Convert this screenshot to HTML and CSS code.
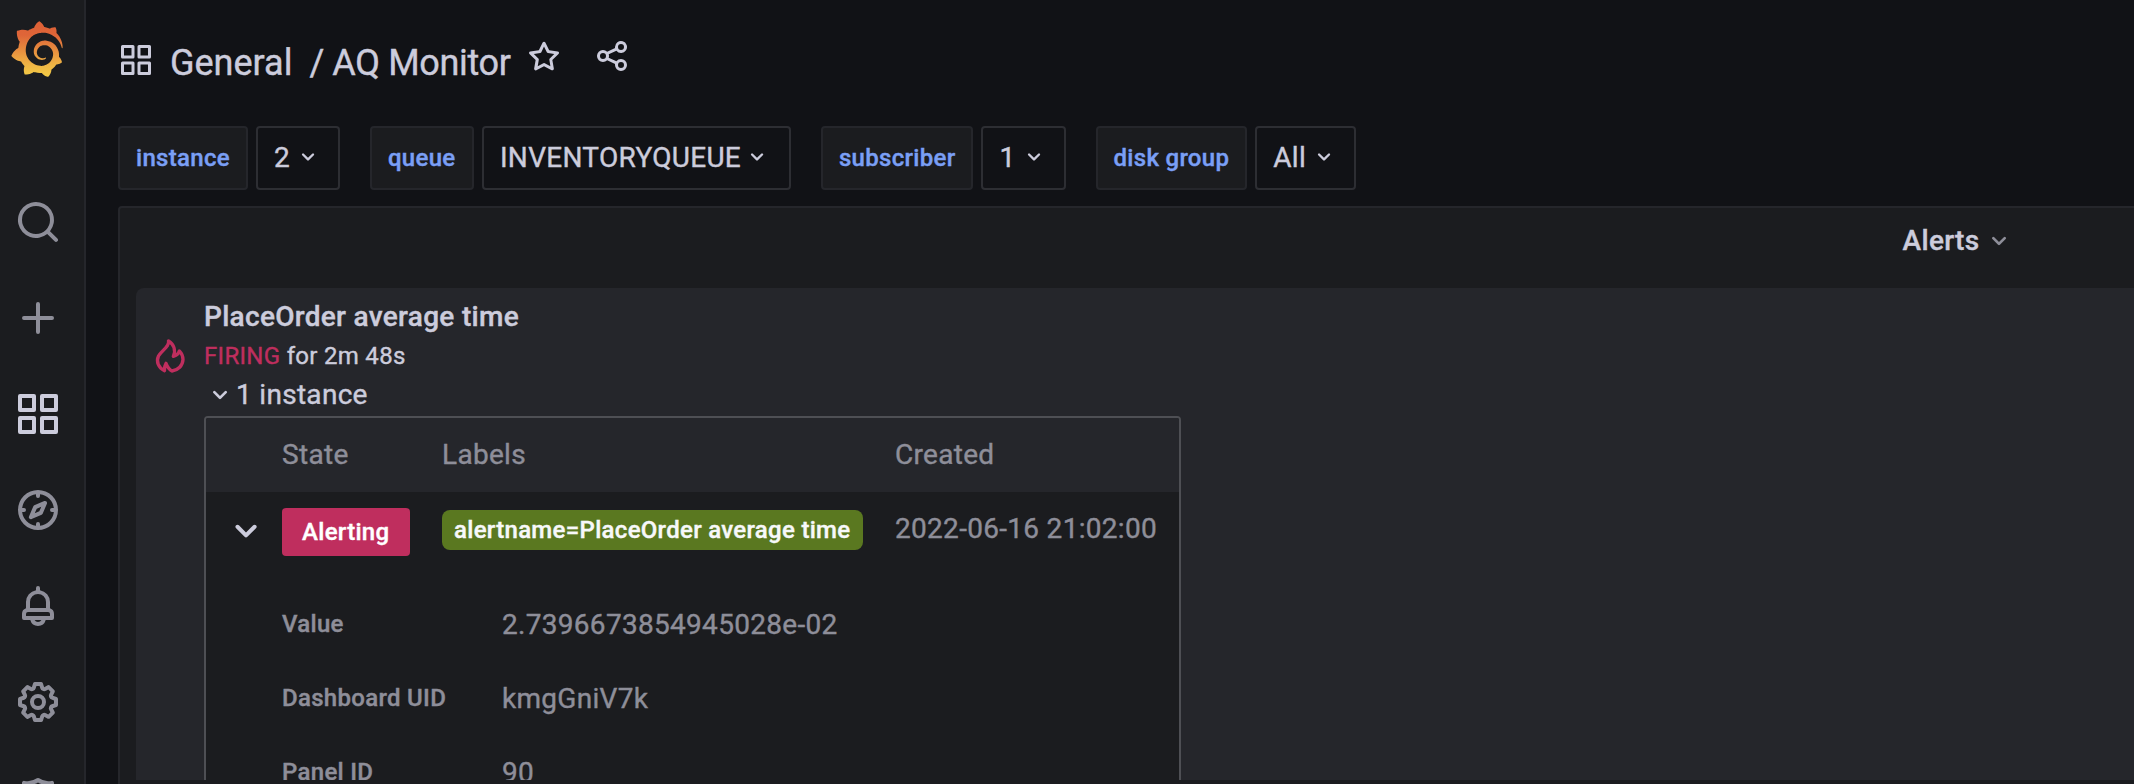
FILE: index.html
```html
<!DOCTYPE html>
<html lang="en">
<head>
<meta charset="utf-8">
<title>AQ Monitor</title>
<link rel="stylesheet" href="styles.css">
</head>
<body>
<svg class="defs" aria-hidden="true">
  <symbol id="apps" viewBox="0 0 24 24"><path d="M10,13H3a1,1,0,0,0-1,1v7a1,1,0,0,0,1,1h7a1,1,0,0,0,1-1V14A1,1,0,0,0,10,13ZM9,20H4V15H9ZM21,2H14a1,1,0,0,0-1,1v7a1,1,0,0,0,1,1h7a1,1,0,0,0,1-1V3A1,1,0,0,0,21,2ZM20,9H15V4h5Zm1,4H14a1,1,0,0,0-1,1v7a1,1,0,0,0,1,1h7a1,1,0,0,0,1-1V14A1,1,0,0,0,21,13Zm-1,7H15V15h5ZM10,2H3A1,1,0,0,0,2,3v7a1,1,0,0,0,1,1h7a1,1,0,0,0,1-1V3A1,1,0,0,0,10,2ZM9,9H4V4H9Z"/></symbol>
  <symbol id="angle" viewBox="0 0 24 24"><path d="M17,9.17a1,1,0,0,0-1.41,0L12,12.71,8.46,9.17a1,1,0,0,0-1.41,0,1,1,0,0,0,0,1.42l4.24,4.24a1,1,0,0,0,1.42,0L17,10.59A1,1,0,0,0,17,9.17Z"/></symbol>
</svg>
<div class="app">
  <nav class="sidebar">
    <svg class="logo" viewBox="0 0 351 365"><defs><linearGradient id="lg" gradientUnits="userSpaceOnUse" x1="175" y1="365" x2="175" y2="1"><stop offset="0" stop-color="#f3cc45"/><stop offset=".2" stop-color="#efb745"/><stop offset=".75" stop-color="#df6538"/><stop offset="1" stop-color="#dd6036"/></linearGradient></defs><path fill="url(#lg)" d="M342,161.2c-0.6-6.1-1.6-13.1-3.6-20.9c-2-7.7-5-16.2-9.4-25c-4.4-8.8-10.1-17.9-17.5-26.8c-2.9-3.5-6.1-6.9-9.5-10.2c5.1-20.3-6.2-37.9-6.2-37.9c-19.5-1.2-31.9,6.1-36.5,9.4c-0.8-0.3-1.5-0.7-2.3-1c-3.3-1.3-6.7-2.6-10.3-3.7c-3.5-1.1-7.1-2.1-10.8-3c-3.7-0.9-7.4-1.6-11.2-2.2c-0.7-0.1-1.3-0.2-2-0.3c-8.5-27.2-32.9-38.6-32.9-38.6c-27.3,17.3-32.4,41.5-32.4,41.5s-0.1,0.5-0.3,1.4c-1.5,0.4-3,0.9-4.5,1.3c-2.1,0.6-4.2,1.4-6.2,2.2c-2.1,0.8-4.1,1.6-6.2,2.5c-4.1,1.8-8.2,3.8-12.2,6c-3.9,2.2-7.7,4.6-11.4,7.1c-0.5-0.2-1-0.4-1-0.4c-37.8-14.4-71.3,2.9-71.3,2.9c-3.1,40.2,15.1,65.5,18.7,70.1c-0.9,2.5-1.7,5-2.5,7.5c-2.8,9.1-4.9,18.4-6.2,28.1c-0.2,1.4-0.4,2.8-0.5,4.2C18.8,192.7,8.5,228,8.5,228c29.1,33.5,63.1,35.6,63.1,35.6c0,0,0.1-0.1,0.1-0.1c4.3,7.7,9.3,15,14.9,21.9c2.4,2.9,4.8,5.6,7.4,8.3c-10.6,30.4,1.5,55.6,1.5,55.6c32.4,1.2,53.7-14.2,58.2-17.7c3.2,1.1,6.5,2.1,9.8,2.9c10,2.6,20.2,4.1,30.4,4.5c2.5,0.1,5.1,0.2,7.6,0.1l1.2,0l0.8,0l1.6,0l1.6-0.1l0,0.1c15.3,21.8,42.1,24.9,42.1,24.9c19.1-20.1,20.2-40.1,20.2-44.4l0,0c0,0,0-0.1,0-0.3c0-0.4,0-0.6,0-0.6l0,0c0-0.3,0-0.6,0-0.9c4-2.8,7.8-5.8,11.4-9.1c7.6-6.9,14.3-14.8,19.9-23.3c0.5-0.8,1-1.6,1.5-2.4c21.6,1.2,36.9-13.4,36.9-13.4c-3.6-22.5-16.4-33.5-19.1-35.6l0,0c0,0-0.1-0.1-0.3-0.2c-0.2-0.1-0.2-0.2-0.2-0.2c0,0,0,0,0,0c-0.1-0.1-0.3-0.2-0.5-0.3c0.1-1.4,0.2-2.7,0.3-4.1c0.2-2.4,0.2-4.9,0.2-7.3l0-1.8l0-0.9l0-0.5c0-0.6,0-0.4,0-0.6l-0.1-1.5l-0.1-2c0-0.7-0.1-1.3-0.2-1.9c-0.1-0.6-0.1-1.3-0.2-1.9l-0.2-1.9l-0.3-1.9c-0.4-2.5-0.8-4.9-1.4-7.4c-2.3-9.7-6.1-18.9-11-27.2c-5-8.3-11.2-15.6-18.3-21.8c-7-6.2-14.9-11.2-23.1-14.9c-8.3-3.7-16.9-6.1-25.5-7.2c-4.3-0.6-8.6-0.8-12.9-0.7l-1.6,0l-0.4,0c-0.1,0-0.6,0-0.5,0l-0.7,0l-1.6,0.1c-0.6,0-1.2,0.1-1.7,0.1c-2.2,0.2-4.4,0.5-6.5,0.9c-8.6,1.6-16.7,4.7-23.8,9c-7.1,4.3-13.3,9.6-18.3,15.6c-5,6-8.9,12.7-11.6,19.6c-2.7,6.9-4.2,14.1-4.6,21c-0.1,1.7-0.1,3.5-0.1,5.2c0,0.4,0,0.9,0,1.3l0.1,1.4c0.1,0.8,0.1,1.7,0.2,2.5c0.3,3.5,1,6.9,1.9,10.1c1.9,6.5,4.9,12.4,8.6,17.4c3.7,5,8.2,9.1,12.9,12.4c4.7,3.2,9.8,5.5,14.8,7c5,1.5,10,2.1,14.7,2.1c0.6,0,1.2,0,1.7,0c0.3,0,0.6,0,0.9,0c0.3,0,0.6,0,0.9-0.1c0.5,0,1-0.1,1.5-0.1c0.1,0,0.3,0,0.4-0.1l0.5-0.1c0.3,0,0.6-0.1,0.9-0.1c0.6-0.1,1.1-0.2,1.7-0.3c0.6-0.1,1.1-0.2,1.6-0.4c1.1-0.2,2.1-0.6,3.1-0.9c2-0.7,4-1.5,5.7-2.4c1.8-0.9,3.4-2,5-3c0.4-0.3,0.9-0.6,1.3-1c1.6-1.3,1.9-3.7,0.6-5.3c-1.1-1.4-3.1-1.8-4.7-0.9c-0.4,0.2-0.8,0.4-1.2,0.6c-1.4,0.7-2.8,1.3-4.3,1.8c-1.5,0.5-3.1,0.9-4.7,1.2c-0.8,0.1-1.6,0.2-2.5,0.3c-0.4,0-0.8,0.1-1.3,0.1c-0.4,0-0.9,0-1.2,0c-0.4,0-0.8,0-1.2,0c-0.5,0-1,0-1.5-0.1c0,0-0.3,0-0.1,0l-0.2,0l-0.3,0c-0.2,0-0.5,0-0.7-0.1c-0.5-0.1-0.9-0.1-1.4-0.2c-3.7-0.5-7.4-1.6-10.9-3.2c-3.6-1.6-7-3.8-10.1-6.6c-3.1-2.8-5.8-6.1-7.9-9.9c-2.1-3.8-3.6-8-4.3-12.4c-0.3-2.2-0.5-4.5-0.4-6.7c0-0.6,0.1-1.2,0.1-1.8c0,0.2,0-0.1,0-0.1l0-0.2l0-0.5c0-0.3,0.1-0.6,0.1-0.9c0.1-1.2,0.3-2.4,0.5-3.6c1.7-9.6,6.5-19,13.9-26.1c1.9-1.8,3.9-3.4,6-4.9c2.1-1.5,4.4-2.8,6.8-3.9c2.4-1.1,4.8-2,7.4-2.7c2.5-0.7,5.1-1.1,7.8-1.4c1.3-0.1,2.6-0.2,4-0.2c0.4,0,0.6,0,0.9,0l1.1,0l0.7,0c0.3,0,0,0,0.1,0l0.3,0l1.1,0.1c2.9,0.2,5.7,0.6,8.5,1.3c5.6,1.2,11.1,3.3,16.2,6.1c10.2,5.7,18.9,14.5,24.2,25.1c2.7,5.3,4.6,11,5.5,16.9c0.2,1.5,0.4,3,0.5,4.5l0.1,1.1l0.1,1.1c0,0.4,0,0.8,0,1.1c0,0.4,0,0.8,0,1.1l0,1l0,1.1c0,0.7-0.1,1.9-0.1,2.6c-0.1,1.6-0.3,3.3-0.5,4.9c-0.2,1.6-0.5,3.2-0.8,4.8c-0.3,1.6-0.7,3.2-1.1,4.7c-0.8,3.1-1.8,6.2-3,9.3c-2.4,6-5.6,11.8-9.4,17.1c-7.7,10.6-18.2,19.2-30.2,24.7c-6,2.7-12.3,4.7-18.8,5.7c-3.2,0.6-6.5,0.9-9.8,1l-0.6,0l-0.5,0l-1.1,0l-1.6,0l-0.8,0c0.4,0-0.1,0-0.1,0l-0.3,0c-1.8,0-3.5-0.1-5.3-0.3c-7-0.5-13.9-1.8-20.7-3.7c-6.7-1.9-13.2-4.6-19.4-7.8c-12.3-6.6-23.4-15.6-32-26.5c-4.3-5.4-8.1-11.3-11.2-17.4c-3.1-6.1-5.6-12.6-7.4-19.1c-1.8-6.6-2.9-13.3-3.4-20.1l-0.1-1.3l0-0.3l0-0.3l0-0.6l0-1.1l0-0.3l0-0.4l0-0.8l0-1.6l0-0.3c0,0,0,0.1,0-0.1l0-0.6c0-0.8,0-1.7,0-2.5c0.1-3.3,0.4-6.8,0.8-10.2c0.4-3.4,1-6.9,1.7-10.3c0.7-3.4,1.5-6.8,2.5-10.2c1.9-6.7,4.3-13.2,7.1-19.3c5.7-12.2,13.1-23.1,22-31.8c2.2-2.2,4.5-4.2,6.9-6.2c2.4-1.9,4.9-3.7,7.5-5.4c2.5-1.7,5.2-3.2,7.9-4.6c1.3-0.7,2.7-1.4,4.1-2c0.7-0.3,1.4-0.6,2.1-0.9c0.7-0.3,1.4-0.6,2.1-0.9c2.8-1.2,5.7-2.2,8.7-3.1c0.7-0.2,1.5-0.4,2.2-0.7c0.7-0.2,1.5-0.4,2.2-0.6c1.5-0.4,3-0.8,4.5-1.1c0.7-0.2,1.5-0.3,2.3-0.5c0.8-0.2,1.5-0.3,2.3-0.5c0.8-0.1,1.5-0.3,2.3-0.4l1.1-0.2l1.2-0.2c0.8-0.1,1.5-0.2,2.3-0.3c0.9-0.1,1.7-0.2,2.6-0.3c0.7-0.1,1.9-0.2,2.6-0.3c0.5-0.1,1.1-0.1,1.6-0.2l1.1-0.1l0.5-0.1l0.6,0c0.9-0.1,1.7-0.1,2.6-0.2l1.3-0.1c0,0,0.5,0,0.1,0l0.3,0l0.6,0c0.7,0,1.5-0.1,2.2-0.1c2.9-0.1,5.9-0.1,8.8,0c5.8,0.2,11.5,0.9,17,1.9c11.1,2.1,21.5,5.6,31,10.3c9.5,4.6,17.9,10.3,25.3,16.5c0.5,0.4,0.9,0.8,1.4,1.2c0.4,0.4,0.9,0.8,1.3,1.2c0.9,0.8,1.7,1.6,2.6,2.4c0.9,0.8,1.7,1.6,2.5,2.4c0.8,0.8,1.6,1.6,2.4,2.5c3.1,3.3,6,6.6,8.6,10c5.2,6.7,9.4,13.5,12.7,19.9c0.2,0.4,0.4,0.8,0.6,1.2c0.2,0.4,0.4,0.8,0.6,1.2c0.4,0.8,0.8,1.6,1.1,2.4c0.4,0.8,0.7,1.5,1.1,2.3c0.3,0.8,0.7,1.5,1,2.3c1.2,3,2.4,5.9,3.3,8.6c1.5,4.4,2.6,8.3,3.5,11.7c0.3,1.4,1.6,2.3,3,2.1c1.5-0.1,2.6-1.3,2.6-2.8C342.6,170.4,342.5,166.1,342,161.2z"/></svg>
    <svg class="nav-icon" viewBox="0 0 24 24"><path d="M21.71,20.29,18,16.61A9,9,0,1,0,16.61,18l3.68,3.68a1,1,0,0,0,1.42,0A1,1,0,0,0,21.71,20.29ZM11,18a7,7,0,1,1,7-7A7,7,0,0,1,11,18Z"/></svg>
    <svg class="nav-icon" viewBox="0 0 24 24"><path d="M19,11H13V5a1,1,0,0,0-2,0v6H5a1,1,0,0,0,0,2h6v6a1,1,0,0,0,2,0V13h6a1,1,0,0,0,0-2Z"/></svg>
    <svg class="nav-icon active"><use href="#apps"/></svg>
    <svg class="nav-icon" viewBox="0 0 24 24"><path d="M12,2A10,10,0,1,0,22,12,10,10,0,0,0,12,2Zm1,17.93V19a1,1,0,0,0-2,0v.93A8,8,0,0,1,4.07,13H5a1,1,0,0,0,0-2H4.07A8,8,0,0,1,11,4.07V5a1,1,0,0,0,2,0V4.07A8,8,0,0,1,19.93,11H19a1,1,0,0,0,0,2h.93A8,8,0,0,1,13,19.93ZM15.14,7.55l-5,2.12a1,1,0,0,0-.52.52l-2.12,5a1,1,0,0,0,.21,1.1,1,1,0,0,0,.7.3.93.93,0,0,0,.4-.09l5-2.12a1,1,0,0,0,.52-.52l2.12-5a1,1,0,0,0-1.31-1.31Zm-2.49,5.1-2.28,1,1-2.28,2.28-1Z"/></svg>
    <svg class="nav-icon" viewBox="0 0 24 24"><path d="M18,13.18V10a6,6,0,0,0-5-5.91V3a1,1,0,0,0-2,0V4.09A6,6,0,0,0,6,10v3.18A3,3,0,0,0,4,16v2a1,1,0,0,0,1,1H8.14a4,4,0,0,0,7.72,0H19a1,1,0,0,0,1-1V16A3,3,0,0,0,18,13.18ZM8,10a4,4,0,0,1,8,0v3H8Zm4,10a2,2,0,0,1-1.72-1h3.44A2,2,0,0,1,12,20Zm6-3H6V16a1,1,0,0,1,1-1H17a1,1,0,0,1,1,1Z"/></svg>
    <svg class="nav-icon" viewBox="0 0 24 24"><path d="M21.32,9.55l-1.89-.63.89-1.78A1,1,0,0,0,20.13,6L18,3.87a1,1,0,0,0-1.15-.19l-1.78.89-.63-1.89A1,1,0,0,0,13.5,2h-3a1,1,0,0,0-.95.68L8.92,4.57,7.14,3.68A1,1,0,0,0,6,3.87L3.87,6a1,1,0,0,0-.19,1.15l.89,1.78-1.89.63A1,1,0,0,0,2,10.5v3a1,1,0,0,0,.68.95l1.89.63-.89,1.78A1,1,0,0,0,3.87,18L6,20.13a1,1,0,0,0,1.15.19l1.78-.89.63,1.89a1,1,0,0,0,.95.68h3a1,1,0,0,0,.95-.68l.63-1.89,1.78.89A1,1,0,0,0,18,20.13L20.13,18a1,1,0,0,0,.19-1.15l-.89-1.78,1.89-.63A1,1,0,0,0,22,13.5v-3A1,1,0,0,0,21.32,9.55ZM20,12.78l-1.2.4A2,2,0,0,0,17.64,16l.57,1.14-1.1,1.1L16,17.64a2,2,0,0,0-2.79,1.16l-.4,1.2H11.22l-.4-1.2A2,2,0,0,0,8,17.64l-1.14.57-1.1-1.1L6.36,16A2,2,0,0,0,5.2,13.18L4,12.78V11.22l1.2-.4A2,2,0,0,0,6.36,8L5.79,6.89l1.1-1.1L8,6.36A2,2,0,0,0,10.82,5.2l.4-1.2h1.56l.4,1.2A2,2,0,0,0,16,6.36l1.14-.57,1.1,1.1L17.64,8a2,2,0,0,0,1.16,2.79l1.2.4ZM12,8a4,4,0,1,0,4,4A4,4,0,0,0,12,8Zm0,6a2,2,0,1,1,2-2A2,2,0,0,1,12,14Z"/></svg>
    <svg class="nav-icon" viewBox="0 0 24 24"><path d="M19.63,3.65a1,1,0,0,0-.84-.2,8,8,0,0,1-6.22-1.27,1,1,0,0,0-1.14,0A8,8,0,0,1,5.21,3.45a1,1,0,0,0-.84.2A1,1,0,0,0,4,4.43v7.45a9,9,0,0,0,3.77,7.33l3.65,2.6a1,1,0,0,0,1.16,0l3.65-2.6A9,9,0,0,0,20,11.88V4.43A1,1,0,0,0,19.63,3.65ZM18,11.88a7,7,0,0,1-2.93,5.7L12,19.77,8.93,17.58A7,7,0,0,1,6,11.88V5.58a10,10,0,0,0,6-1.39,10,10,0,0,0,6,1.39Z"/></svg>
  </nav>
  <main class="main">
    <header class="toolbar">
      <svg class="tool-icon grid-icon"><use href="#apps"/></svg>
      <h1 class="crumbs"><span class="folder">General</span><span class="slash">/</span><span class="dash">AQ Monitor</span></h1>
      <svg class="tool-icon star" viewBox="0 0 24 24"><path d="M22,9.67A1,1,0,0,0,21.14,9l-5.69-.83L12.9,3a1,1,0,0,0-1.8,0L8.55,8.16,2.86,9a1,1,0,0,0-.81.68,1,1,0,0,0,.25,1l4.13,4-1,5.68A1,1,0,0,0,6.9,21.44L12,18.77l5.1,2.67a.93.93,0,0,0,.46.12,1,1,0,0,0,.59-.19,1,1,0,0,0,.4-1l-1-5.68,4.13-4A1,1,0,0,0,22,9.67Zm-6.15,4a1,1,0,0,0-.29.88l.72,4.2-3.76-2a1.06,1.06,0,0,0-.94,0l-3.76,2,.72-4.2a1,1,0,0,0-.29-.88l-3-3,4.21-.61a1,1,0,0,0,.76-.55L12,5.7l1.88,3.82a1,1,0,0,0,.76.55l4.21.61Z"/></svg>
      <svg class="tool-icon share" viewBox="0 0 24 24"><path d="M18,14a4,4,0,0,0-3.08,1.48l-5.1-2.35a3.64,3.64,0,0,0,0-2.26l5.1-2.35A4,4,0,1,0,14,6a4.17,4.17,0,0,0,.07.71L8.79,9.14a4,4,0,1,0,0,5.72l5.28,2.43A4.17,4.17,0,0,0,14,18a4,4,0,1,0,4-4ZM18,4a2,2,0,1,1-2,2A2,2,0,0,1,18,4ZM6,14a2,2,0,1,1,2-2A2,2,0,0,1,6,14Zm12,6a2,2,0,1,1,2-2A2,2,0,0,1,18,20Z"/></svg>
    </header>
    <div class="variables">
      <div class="variable"><span class="var-label">instance</span><span class="var-select">2<svg class="angle-sm"><use href="#angle"/></svg></span></div>
      <div class="variable"><span class="var-label queue">queue</span><span class="var-select">INVENTORYQUEUE<svg class="angle-sm"><use href="#angle"/></svg></span></div>
      <div class="variable"><span class="var-label">subscriber</span><span class="var-select">1<svg class="angle-sm"><use href="#angle"/></svg></span></div>
      <div class="variable"><span class="var-label">disk group</span><span class="var-select">All<svg class="angle-sm"><use href="#angle"/></svg></span></div>
    </div>
    <section class="panel">
      <h2 class="panel-title">Alerts<svg class="angle-md muted"><use href="#angle"/></svg></h2>
      <div class="panel-body">
        <article class="alert">
          <svg class="fire" viewBox="0 0 24 24"><path d="M11.1 3C11.900 6.200 7 8.600 5.100 12C3.500 15.300 5.100 19.200 8.700 20.800C8.500 19 8.900 17.500 9.600 16.400C10.300 18.200 11.500 20.200 13.200 21C16.900 20.500 19.600 17.800 19.800 14.200C19.800 11.800 18.900 10.300 17.600 9C17 10.800 15.600 11.800 14 12.200C15.600 8.500 14.300 5 11.100 3Z"/></svg>
          <div class="alert-body">
            <h3 class="alert-name">PlaceOrder average time</h3>
            <div class="alert-state"><span class="firing">FIRING</span> for 2m 48s</div>
            <div class="instances"><svg class="angle-md"><use href="#angle"/></svg>1 instance</div>
            <div class="table">
              <div class="row head"><span></span><span>State</span><span>Labels</span><span>Created</span></div>
              <div class="row item">
                <svg class="angle-lg"><use href="#angle"/></svg>
                <span><span class="badge">Alerting</span></span>
                <span><span class="tag">alertname=PlaceOrder average time</span></span>
                <span class="date">2022-06-16 21:02:00</span>
              </div>
              <dl class="details">
                <dt>Value</dt><dd>2.7396673854945028e-02</dd>
                <dt>Dashboard UID</dt><dd>kmgGniV7k</dd>
                <dt>Panel ID</dt><dd>90</dd>
              </dl>
            </div>
          </div>
        </article>
      </div>
    </section>
  </main>
</div>
</body>
</html>
```
FILE: styles.css
```css
* { box-sizing: border-box; }
body {
  margin: 0;
  height: 784px;
  overflow: hidden;
  background: #111216;
  color: #ccccdc;
  font: 400 28px/44px Roboto, sans-serif;
  letter-spacing: 0.3px;
  -webkit-text-stroke: 0.4px currentColor;
}
h1, h2, h3, dl, dd { margin: 0; font: inherit; }
svg { display: block; flex: none; fill: currentColor; }
.defs { display: none; }
.app { display: flex; height: 784px; overflow: hidden; }

.sidebar {
  flex: none;
  display: flex;
  flex-direction: column;
  width: 86px;
  padding: 21px 0 0 10px;
  border-right: 2px solid #25262b;
  background: #1b1c1f;
  color: #8e8e99;
}
.logo { width: 54px; height: 56px; margin-bottom: 121px; }
.nav-icon { width: 48px; height: 48px; margin: 0 0 48px 4px; }
.nav-icon.active { color: #ccccdc; }

.main { flex: none; width: 3714px; padding-left: 32px; }
.toolbar { display: flex; height: 126px; padding-top: 38px; }
.tool-icon { width: 36px; height: 36px; }
.grid-icon { margin-top: 4px; }
.crumbs { display: flex; width: 356px; margin-left: 16px; padding-top: 1px; font-size: 36px; line-height: 48px; letter-spacing: 0; white-space: nowrap; }
.slash { margin: 0 8px 0 17px; }
.dash { letter-spacing: -0.35px; }
.share { margin-left: 32px; }

.variables { display: flex; gap: 30px; margin-bottom: 16px; }
.variable { display: flex; gap: 8px; }
.var-label, .var-select {
  display: flex;
  align-items: center;
  height: 64px;
  padding: 0 16px;
  border: 2px solid #25262b;
  border-radius: 4px;
  white-space: nowrap;
}
.var-label { background: #1b1c1f; color: #7a9ff5; font-size: 24px; font-weight: 500; }
.var-label.queue { width: 104px; }
.queue + .var-select { width: 309px; }
.queue + .var-select .angle-sm { margin-left: 2px; }
.var-select { border-color: #2d2e33; }
.angle-sm { width: 28px; height: 28px; margin: -2px 0 0 4px; }
.angle-md { width: 32px; height: 32px; }
.angle-lg { width: 48px; height: 48px; }
.muted { color: #8e8e99; }

.panel { height: 600px; border: 2px solid #25262b; border-radius: 4px; background: #1b1c1f; }
.panel-title { display: flex; justify-content: center; align-items: center; height: 64px; padding-top: 2px; gap: 4px; font-weight: 500; }
.panel-body { height: 508px; padding: 16px; overflow: hidden; }
.alert { display: flex; height: 700px; border-radius: 8px; background: #25262b; }
.fire { width: 40px; height: 40px; margin: 48px 14px 0; fill: none; stroke: #bf2e5e; stroke-width: 2; stroke-linejoin: round; }
.alert-name { padding-top: 7px; font-weight: 500; }
.alert-state { height: 35px; font-size: 24px; line-height: 34px; }
.firing { color: #bf2e5e; }
.instances { display: flex; align-items: center; height: 42px; padding-bottom: 1px; }

.table { width: 977px; height: 500px; border: 2px solid #4e4f54; border-radius: 4px; background: #1b1c1f; color: #8e8e99; overflow: hidden; }
.row { display: grid; grid-template-columns: 76px 160px 453px 1fr; }
.head { height: 74px; background: #25262b; line-height: 74px; }
.item { height: 100px; padding-top: 16px; }
.angle-lg { margin: -1px 0 0 16px; color: #ccccdc; }
.badge, .tag { display: inline-block; vertical-align: top; font-size: 24px; font-weight: 500; }
.badge { width: 128px; height: 48px; padding: 0 20px; border-radius: 4px; background: #bf2e5e; color: #fff; line-height: 48px; }
.tag { width: 421px; height: 40px; margin-top: 2px; padding: 0 12px; border-radius: 8px; background: #5a7820; color: #f7f8fa; line-height: 40px; }
.date { line-height: 42px; }
.details { display: grid; grid-template-columns: 220px 1fr; grid-auto-rows: 74px; padding-left: 76px; line-height: 64px; }
.details dt { font-size: 24px; font-weight: 500; }
.details dd { line-height: 66px; }
```
